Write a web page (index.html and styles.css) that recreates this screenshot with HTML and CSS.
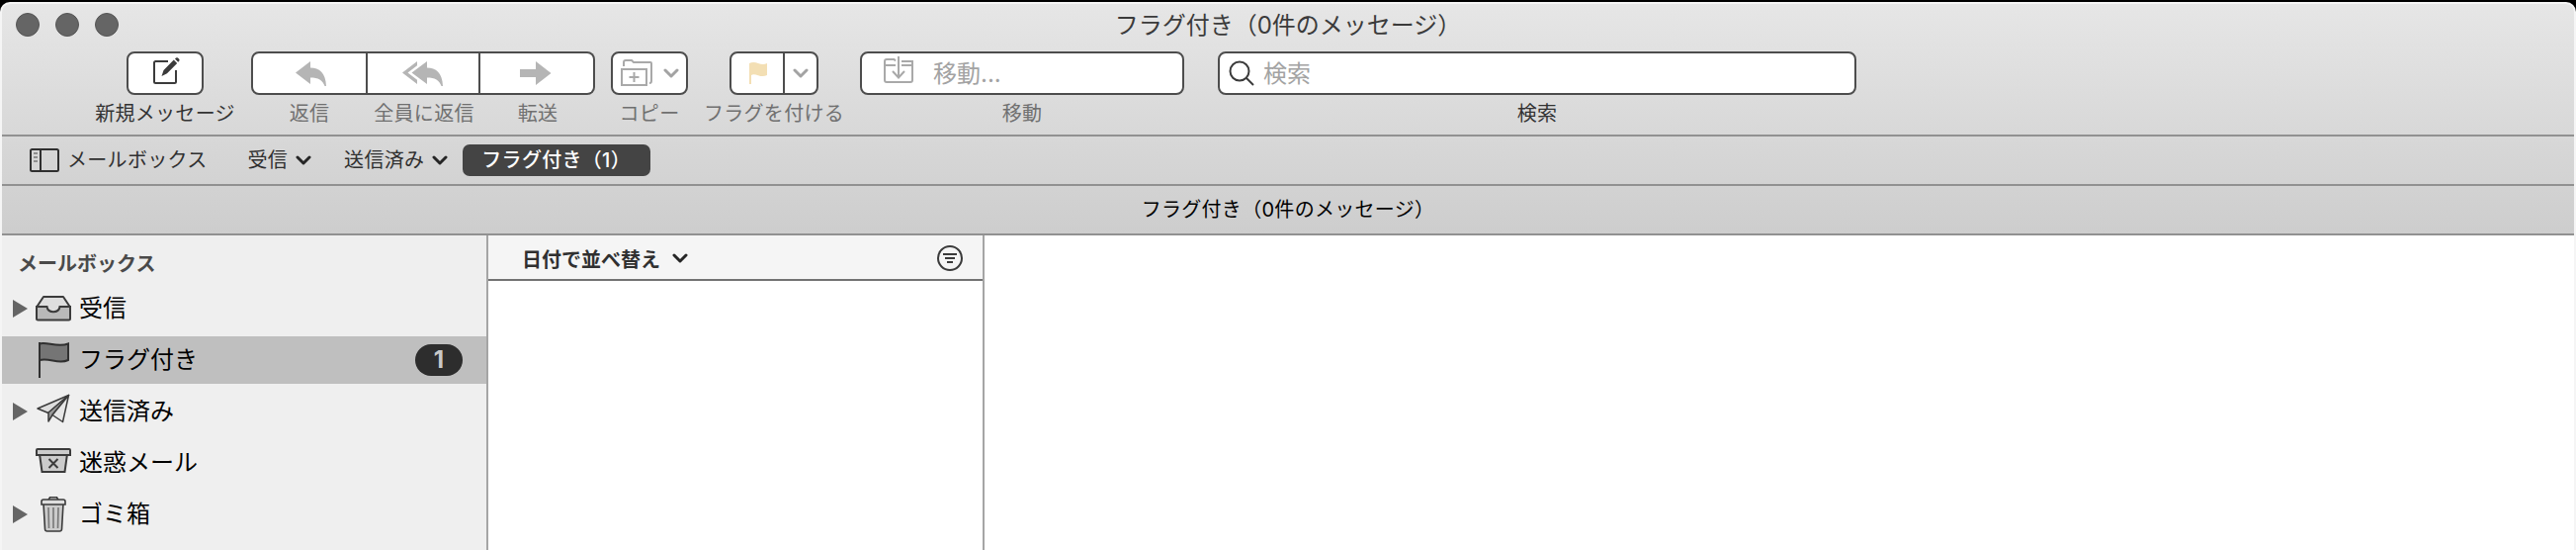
FILE: index.html
```
<!DOCTYPE html>
<html lang="ja">
<head>
  <meta charset="UTF-8">
  <title>フラグ付き（0件のメッセージ）</title>
  <link rel="stylesheet" href="styles.css">
</head>
<body>
  <div class="window">
    <header class="chrome">
      <div class="titlebar">
        <div class="lights">
          <span class="light"></span>
          <span class="light"></span>
          <span class="light"></span>
        </div>
        <h1 class="title">フラグ付き（0件のメッセージ）</h1>
      </div>

      <div class="toolbar">
        <div class="tool compose">
          <button class="btn">
            <svg width="30" height="30" viewBox="0 0 30 30">
              <path d="M17 5H4.500Q3 5 3 6.500V25.500Q3 27 4.500 27H23.500Q25 27 25 25.500V14" fill="none" stroke="#3b3b3b" stroke-width="2"/>
              <path d="M10.500 20l2-6L22.800 3.600l3.400 3.400L16 17.300zM24 2.600l1-1q1-.8 2 0l1.200 1.200q.9.900 0 2l-1 1z" fill="#3b3b3b"/>
            </svg>
          </button>
          <span class="label">新規メッセージ</span>
        </div>

        <div class="segments">
          <div class="tool off reply">
            <button class="btn">
              <svg width="34" height="28" viewBox="0 0 34 28">
                <path d="M2 13.500L17 2v6.500c9 0 15.500 5 16 18.500h-1.500C29.500 21 25 18.500 17 18.500V25z" fill="#b5b5b5"/>
              </svg>
            </button>
            <span class="label">返信</span>
          </div>
          <div class="tool off reply-all">
            <button class="btn">
              <svg width="44" height="28" viewBox="0 0 44 28">
                <path d="M11.500 13.500L27 2v6.500c9 0 15.500 5 16 18.500h-1.500C39.500 21 35 18.500 27 18.500V25z" fill="#b5b5b5"/>
                <path d="M17 2v4.200L7.500 13.500l9.500 7.300V25L2 13.500z" fill="#b5b5b5"/>
              </svg>
            </button>
            <span class="label">全員に返信</span>
          </div>
          <div class="tool off forward">
            <button class="btn">
              <svg width="32" height="26" viewBox="0 0 32 26">
                <path d="M0 9h16V1l15.500 12L16 25v-8H0z" fill="#b5b5b5"/>
              </svg>
            </button>
            <span class="label">転送</span>
          </div>
        </div>

        <div class="tool off copy">
          <button class="btn">
            <svg width="34" height="30" viewBox="0 0 34 30" fill="none" stroke="#a9a9a9" stroke-width="2">
              <path d="M2 11h25v16H2zM14.500 14v10M9.500 19h10"/>
              <path d="M4 8V4q0-2 2-2h6l2 2h17q1 0 1 1v18q0 2-2 2"/>
            </svg>
            <svg class="chev" width="16" height="10" viewBox="0 0 16 10"><path d="M2 2l6 6 6-6"/></svg>
          </button>
          <span class="label">コピー</span>
        </div>

        <div class="tool off flag">
          <button class="btn">
            <span class="flag-main">
              <svg width="20" height="24" viewBox="0 0 20 24">
                <path d="M1 2q4-2 9 0t9 0v12q-4 2-9 .2t-7-.2v9H1z" fill="#f3dfb4"/>
              </svg>
            </span>
            <span class="flag-more">
              <svg class="chev" width="16" height="10" viewBox="0 0 16 10"><path d="M2 2l6 6 6-6"/></svg>
            </span>
          </button>
          <span class="label">フラグを付ける</span>
        </div>

        <div class="tool off move">
          <div class="field">
            <svg width="30" height="28" viewBox="0 0 30 28" fill="none" stroke="#a9a9a9" stroke-width="2">
              <path d="M12 4.500L10.500 3H3Q1 3 1 5v19q0 2 2 2h24q2 0 2-2V5H18M1 9h11M18 9h11"/>
              <path d="M15 0v21M9 15l6 6.500 6-6.500"/>
            </svg>
            <span class="hint">移動...</span>
          </div>
          <span class="label">移動</span>
        </div>

        <div class="tool search">
          <div class="field">
            <svg width="28" height="28" viewBox="0 0 28 28" fill="none" stroke="#3b3b3b" stroke-width="2">
              <circle cx="12" cy="12" r="9.500"/>
              <path d="M18.500 18.500l7.500 7.500"/>
            </svg>
            <span class="hint">検索</span>
          </div>
          <span class="label">検索</span>
        </div>
      </div>

      <nav class="favorites">
        <a class="fav boxes">
          <svg width="30" height="24" viewBox="0 0 30 24" fill="none" stroke="#303030" stroke-width="2">
            <rect x="1" y="1" width="28" height="22" rx="1.500"/>
            <path d="M11 1v22"/>
            <path d="M4 5h4M4 9h4M4 13h4" stroke="#777" stroke-width="1.500"/>
          </svg>
          メールボックス
        </a>
        <a class="fav inbox">受信 <svg class="chev bold" width="16" height="10" viewBox="0 0 16 10"><path d="M2 2l6 6 6-6"/></svg></a>
        <a class="fav sent">送信済み <svg class="chev bold" width="16" height="10" viewBox="0 0 16 10"><path d="M2 2l6 6 6-6"/></svg></a>
        <a class="fav current">フラグ付き（1）</a>
      </nav>

      <div class="tabbar">フラグ付き（0件のメッセージ）</div>
    </header>

    <main class="content">
      <aside class="sidebar">
        <h2 class="side-title">メールボックス</h2>
        <ul class="mailboxes">
          <li class="mailbox">
            <span class="arrow open"></span>
            <svg width="38" height="38" viewBox="0 0 38 38" stroke="#3b3b3b" stroke-width="2">
              <path d="M2 17.500L9 7h20l7 10.500V24H2z" fill="#dedede" stroke-linejoin="round"/>
              <path d="M2 17h10.500c1 7 12 7 13 0H36v12q0 1.500-1.500 1.500h-31Q2 30.500 2 29z" fill="#b9b9b9"/>
            </svg>
            受信
          </li>
          <li class="mailbox selected">
            <span class="arrow"></span>
            <svg width="38" height="38" viewBox="0 0 38 38" stroke="#303030" stroke-width="2">
              <path d="M5 2.500c6-3 18 4.500 29 0V19c-10 5-19-3-29 0" fill="#757575"/>
              <path d="M5 1v36"/>
            </svg>
            フラグ付き
            <span class="badge">1</span>
          </li>
          <li class="mailbox">
            <span class="arrow open"></span>
            <svg width="38" height="38" viewBox="0 0 38 38" stroke="#3b3b3b" stroke-width="1.500" stroke-linejoin="round">
              <path d="M34.500 2.500L3 16l11 4.500z" fill="#dedede"/>
              <path d="M34.500 2.500L14 20v9l4-6.500z" fill="#999"/>
              <path d="M34.500 2.500L18 22.500l10.500 7z" fill="#e6e6e6"/>
            </svg>
            送信済み
          </li>
          <li class="mailbox">
            <span class="arrow"></span>
            <svg width="38" height="38" viewBox="0 0 38 38" stroke="#3b3b3b" stroke-width="2">
              <path d="M5 10h28l-2.500 18h-23z" fill="#cbcbcb"/>
              <path d="M2 11V6q0-1 1-1h32q1 0 1 1v5z" fill="#cbcbcb"/>
              <path d="M14.500 15l9 9M23.500 15l-9 9" fill="none"/>
            </svg>
            迷惑メール
          </li>
          <li class="mailbox">
            <span class="arrow open"></span>
            <svg width="38" height="38" viewBox="0 0 38 38" stroke="#3b3b3b" stroke-width="1.600">
              <path d="M14 4.500l1.500-2.700h7L24 4.500" fill="none"/>
              <path d="M9 8h20l-1.500 26q-.2 2-2.200 2H12.700q-2 0-2.200-2z" fill="#cbcbcb"/>
              <path d="M7 9V6q0-2 2-2h20q2 0 2 2v3z" fill="#dedede"/>
              <path d="M14 12l.5 21M19 12v21M24 12l-.5 21" stroke="#777" fill="none"/>
            </svg>
            ゴミ箱
          </li>
        </ul>
      </aside>

      <section class="messages">
        <div class="sort">
          <span>日付で並べ替え</span>
          <svg class="chev bold" width="16" height="10" viewBox="0 0 16 10"><path d="M2 2l6 6 6-6"/></svg>
          <svg class="filter" width="28" height="28" viewBox="0 0 28 28" fill="none" stroke="#3b3b3b" stroke-width="2">
            <circle cx="14" cy="14" r="12"/>
            <path d="M7 10h14M9 14h10M11 18h6"/>
          </svg>
        </div>
      </section>

      <section class="preview"></section>
    </main>
  </div>
</body>
</html>
```
FILE: styles.css
```
* {
  box-sizing: border-box;
}

body {
  margin: 0;
  background: #000;
  font-family: Inter, "Noto Sans CJK JP", sans-serif;
  font-size: 20px;
  color: #303030;
  overflow: hidden;
}

svg {
  display: block;
  flex: none;
}

.window {
  height: 554px;
  margin-top: 2px;
  border: 2px solid #f5f5f5;
  border-bottom: 0;
  border-radius: 10px 10px 0 0;
  background: #fff;
  overflow: hidden;
  display: flex;
  flex-direction: column;
}

.chrome {
  height: 234px;
  flex: none;
  background: linear-gradient(#e6e6e6, #cdcdcd);
}

/* Title bar */
.titlebar {
  height: 40px;
  display: grid;
  grid-template-columns: 1fr auto 1fr;
  align-items: center;
}

.lights {
  display: flex;
  gap: 16px;
  padding-left: 14px;
}

.light {
  width: 24px;
  height: 24px;
  border-radius: 50%;
  background: #656565;
  border: 1px solid #555;
}

.title {
  margin: 0;
  padding-top: 2px;
  font-size: 24px;
  line-height: 40px;
  font-weight: 400;
  color: #3b3b3b;
}

/* Toolbar */
.toolbar {
  height: 92px;
  padding: 8px 0 0 126px;
  display: flex;
  align-items: flex-start;
}

.tool {
  display: flex;
  flex-direction: column;
  align-items: center;
}

.label {
  margin-top: 5px;
  line-height: 28px;
  letter-spacing: 0.3px;
  white-space: nowrap;
  color: #333;
}

.off .label {
  color: #707070;
}

.btn,
.field {
  width: 100%;
  height: 44px;
  padding: 0;
  display: flex;
  align-items: center;
  justify-content: center;
  background: #fff;
  border: 2px solid #4d4d4d;
  border-radius: 8px;
}

.compose {
  width: 78px;
  margin-right: 48px;
}

.compose svg {
  margin: -4px 0 0 2px;
}

.segments {
  display: flex;
  margin-right: 16px;
}

.reply {
  width: 118px;
}

.reply .btn {
  border-radius: 8px 0 0 8px;
  padding-left: 2px;
}

.reply-all {
  width: 114px;
}

.reply-all .btn {
  border-left: 0;
  border-radius: 0;
  padding-right: 2px;
}

.forward {
  width: 116px;
}

.forward .btn {
  border-left: 0;
  border-radius: 0 8px 8px 0;
  padding-right: 2px;
}

.copy {
  width: 78px;
  margin-right: 42px;
}

.copy .btn {
  gap: 10px;
}

.flag {
  width: 90px;
  margin-right: 42px;
}

.flag-main,
.flag-more {
  height: 40px;
  display: flex;
  align-items: center;
  justify-content: center;
}

.flag-main {
  width: 54px;
  padding-left: 2px;
  border-right: 2px solid #4d4d4d;
}

.flag-more {
  width: 32px;
}

.field {
  justify-content: flex-start;
  font-size: 24px;
  line-height: 40px;
  color: #a3a3a3;
}

.hint {
  padding-top: 2px;
}

.move {
  width: 328px;
  margin-right: 34px;
}

.move .field {
  padding-left: 22px;
  gap: 20px;
}

.move svg {
  margin-top: -6px;
}

.search {
  width: 646px;
}

.search .field {
  padding-left: 8px;
  gap: 8px;
}

.chev {
  fill: none;
  stroke: #a3a3a3;
  stroke-width: 3;
  stroke-linecap: round;
  stroke-linejoin: round;
}

.chev.bold {
  stroke: #262626;
}

/* Favorites and tab bar */
.favorites {
  height: 50px;
  border-top: 2px solid #919191;
  padding-left: 28px;
  display: flex;
  align-items: center;
  letter-spacing: 0.3px;
}

.fav {
  display: flex;
  align-items: center;
  gap: 8px;
  line-height: 32px;
  white-space: nowrap;
}

.boxes {
  margin-right: 41px;
}

.inbox {
  margin-right: 33px;
}

.sent {
  margin-right: 15px;
}

.current {
  width: 190px;
  height: 32px;
  padding-left: 19px;
  border-radius: 7px;
  background: #444;
  color: #fff;
  font-weight: 500;
}

.tabbar {
  height: 52px;
  border: solid #919191;
  border-width: 2px 0;
  text-align: center;
  line-height: 49px;
  letter-spacing: 0.3px;
  color: #000;
}

/* Mailbox list */
.content {
  flex: 1;
  display: flex;
}

.sidebar {
  width: 492px;
  background: #efefef;
  border-right: 2px solid #a5a5a5;
}

.side-title {
  margin: 15px 0 0 16px;
  font-size: 20px;
  line-height: 28px;
  font-weight: 600;
  color: #4a4a4a;
}

.mailboxes {
  list-style: none;
  margin: 7px 0 0;
  padding: 0;
  display: grid;
  gap: 4px;
}

.mailbox {
  height: 48px;
  padding: 0 24px 0 11px;
  display: flex;
  align-items: center;
  font-size: 24px;
  line-height: 48px;
  color: #000;
}

.mailbox svg {
  margin-right: 7px;
}

.selected {
  background: #bfbfbf;
}

.arrow {
  width: 15px;
  margin-right: 7px;
}

.arrow.open {
  border-left: 15px solid #656565;
  border-top: 9px solid transparent;
  border-bottom: 9px solid transparent;
}

.badge {
  width: 48px;
  height: 32px;
  margin-left: auto;
  border-radius: 16px;
  background: #2d2d2d;
  color: #c8c8c8;
  font-weight: 700;
  line-height: 32px;
  text-align: center;
}

/* Message list */
.messages {
  width: 502px;
  border-right: 2px solid #a5a5a5;
}

.sort {
  height: 46px;
  padding: 2px 19px 0 34px;
  display: flex;
  align-items: center;
  background: #f5f5f5;
  border-bottom: 2px solid #737373;
  font-weight: 600;
  color: #303030;
}

.sort .chev {
  margin-left: 12px;
}

.filter {
  margin-left: auto;
}

.preview {
  flex: 1;
}
```
